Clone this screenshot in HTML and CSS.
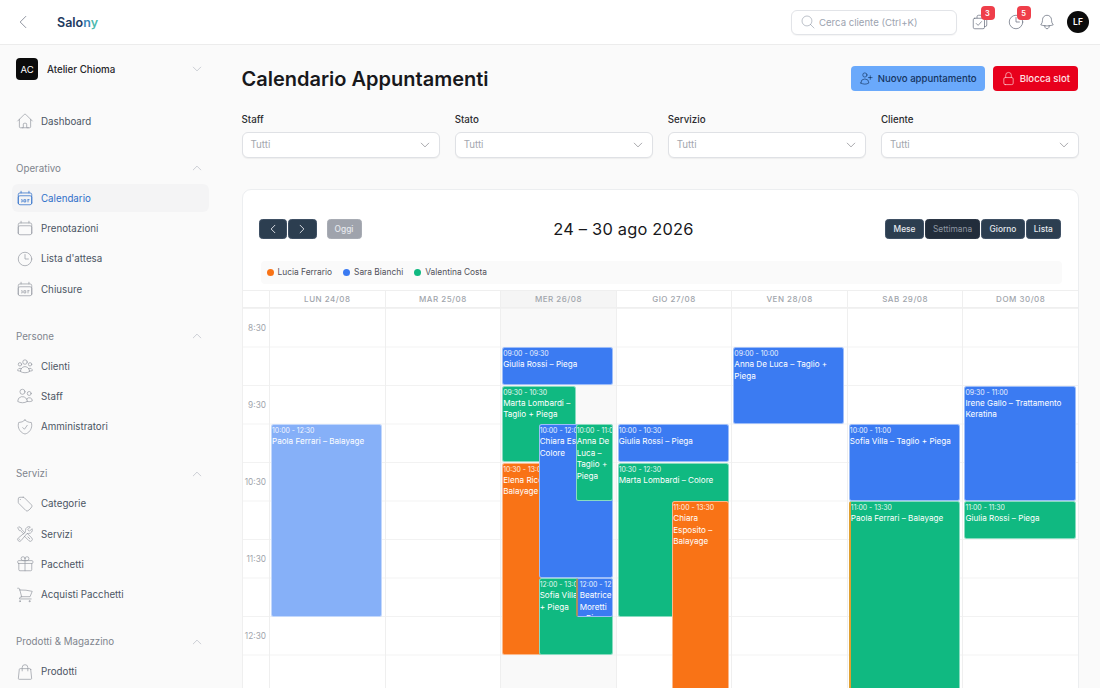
FILE: index.html
```html
<!DOCTYPE html>
<html lang="it">
<head>
  <meta charset="UTF-8" />
  <title>Calendario Appuntamenti</title>
  <link rel="stylesheet" href="styles.css">
</head>
<body>
  <svg class="sprite" xmlns="http://www.w3.org/2000/svg">
    <symbol id="i-home" viewBox="0 0 24 24"><path d="m2.25 12 8.954-8.955c.44-.439 1.152-.439 1.591 0L21.75 12M4.5 9.75v10.125c0 .621.504 1.125 1.125 1.125H9.75v-4.875c0-.621.504-1.125 1.125-1.125h2.25c.621 0 1.125.504 1.125 1.125V21h4.125c.621 0 1.125-.504 1.125-1.125V9.75M8.25 21h8.25"/></symbol>
    <symbol id="i-cal" viewBox="0 0 24 24"><path d="M6.75 3v2.25M17.25 3v2.25M3 18.75V7.5a2.25 2.25 0 0 1 2.25-2.25h13.5A2.25 2.25 0 0 1 21 7.5v11.25m-18 0A2.25 2.25 0 0 0 5.25 21h13.5A2.25 2.25 0 0 0 21 18.75m-18 0v-7.5A2.25 2.25 0 0 1 5.25 9h13.5A2.25 2.25 0 0 1 21 11.25v7.5"/></symbol>
    <symbol id="i-caldays" viewBox="0 0 24 24"><path d="M6.75 3v2.25M17.25 3v2.25M3 18.75V7.5a2.25 2.25 0 0 1 2.25-2.25h13.5A2.25 2.25 0 0 1 21 7.5v11.25m-18 0A2.25 2.25 0 0 0 5.25 21h13.5A2.25 2.25 0 0 0 21 18.75m-18 0v-7.5A2.25 2.25 0 0 1 5.25 9h13.5A2.25 2.25 0 0 1 21 11.25v7.5M7.5 14.25h.75v3h-.75M11 14.25h2v3h-2zM16 14.25h1.5M16 14.25v3"/></symbol>
    <symbol id="i-clock" viewBox="0 0 24 24"><path d="M12 6v6h4.5m4.5 0a9 9 0 1 1-18 0 9 9 0 0 1 18 0Z"/></symbol>
    <symbol id="i-group" viewBox="0 0 24 24"><path d="M18 18.72a9.094 9.094 0 0 0 3.741-.479 3 3 0 0 0-4.682-2.72m.94 3.198.001.031c0 .225-.012.447-.037.666A11.944 11.944 0 0 1 12 21c-2.17 0-4.207-.576-5.963-1.584A6.062 6.062 0 0 1 6 18.719m12 0a5.971 5.971 0 0 0-.941-3.197m0 0A5.995 5.995 0 0 0 12 12.75a5.995 5.995 0 0 0-5.058 2.772m0 0a3 3 0 0 0-4.681 2.72 8.986 8.986 0 0 0 3.74.477m.94-3.197a5.971 5.971 0 0 0-.94 3.197M15 6.75a3 3 0 1 1-6 0 3 3 0 0 1 6 0Zm6 3a2.25 2.25 0 1 1-4.5 0 2.25 2.25 0 0 1 4.5 0Zm-13.5 0a2.25 2.25 0 1 1-4.5 0 2.25 2.25 0 0 1 4.5 0Z"/></symbol>
    <symbol id="i-users" viewBox="0 0 24 24"><path d="M15 19.128a9.38 9.38 0 0 0 2.625.372 9.337 9.337 0 0 0 4.121-.952 4.125 4.125 0 0 0-7.533-2.493M15 19.128v-.003c0-1.113-.285-2.16-.786-3.07M15 19.128v.106A12.318 12.318 0 0 1 8.624 21c-2.331 0-4.512-.645-6.374-1.766l-.001-.109a6.375 6.375 0 0 1 11.964-3.07M12 6.375a3.375 3.375 0 1 1-6.75 0 3.375 3.375 0 0 1 6.75 0Zm8.25 2.25a2.625 2.625 0 1 1-5.25 0 2.625 2.625 0 0 1 5.25 0Z"/></symbol>
    <symbol id="i-shield" viewBox="0 0 24 24"><path d="M9 12.75 11.25 15 15 9.75m-3-7.036A11.959 11.959 0 0 1 3.598 6 11.99 11.99 0 0 0 3 9.749c0 5.592 3.824 10.29 9 11.623 5.176-1.332 9-6.03 9-11.622 0-1.31-.21-2.571-.598-3.751h-.152c-3.196 0-6.1-1.248-8.25-3.285Z"/></symbol>
    <symbol id="i-tag" viewBox="0 0 24 24"><path d="M9.568 3H5.25A2.25 2.25 0 0 0 3 5.25v4.318c0 .597.237 1.17.659 1.591l9.581 9.581c.699.699 1.78.872 2.607.33a18.095 18.095 0 0 0 5.223-5.223c.542-.827.369-1.908-.33-2.607L11.16 3.66A2.25 2.25 0 0 0 9.568 3Z M6 6h.008v.008H6V6Z"/></symbol>
    <symbol id="i-tools" viewBox="0 0 24 24"><path d="M11.42 15.17 17.25 21A2.652 2.652 0 0 0 21 17.25l-5.877-5.877M11.42 15.17l2.496-3.03c.317-.384.74-.626 1.208-.766M11.42 15.17l-4.655 5.653a2.548 2.548 0 1 1-3.586-3.586l6.837-5.63m5.108-.233c.55-.164 1.163-.188 1.743-.14a4.5 4.5 0 0 0 4.486-6.336l-3.276 3.277a3.004 3.004 0 0 1-2.25-2.25l3.276-3.276a4.5 4.5 0 0 0-6.336 4.486c.091 1.076-.071 2.264-.904 2.95l-.102.085m-1.745 1.437L5.909 7.5H4.5L2.25 3.75l1.5-1.5L7.5 4.5v1.409l4.26 4.26m-1.745 1.437 1.745-1.437m6.615 8.206L15.75 15.75M4.867 19.125h.008v.008h-.008v-.008Z"/></symbol>
    <symbol id="i-gift" viewBox="0 0 24 24"><path d="M21 11.25v8.25a1.5 1.5 0 0 1-1.5 1.5H5.25a1.5 1.5 0 0 1-1.5-1.5v-8.25M12 4.875A2.625 2.625 0 1 0 9.375 7.5H12m0-2.625V7.5m0-2.625A2.625 2.625 0 1 1 14.625 7.5H12m0 0V21m-8.625-9.75h18c.621 0 1.125-.504 1.125-1.125v-1.5c0-.621-.504-1.125-1.125-1.125h-18c-.621 0-1.125.504-1.125 1.125v1.5c0 .621.504 1.125 1.125 1.125Z"/></symbol>
    <symbol id="i-cart" viewBox="0 0 24 24"><path d="M2.25 3h1.386c.51 0 .955.343 1.087.835l.383 1.437M7.5 14.25a3 3 0 0 0-3 3h15.75m-12.75-3h11.218c1.121-2.3 2.1-4.684 2.924-7.138a60.114 60.114 0 0 0-16.536-1.84M7.5 14.25 5.106 5.272M6 20.25a.75.75 0 1 1-1.5 0 .75.75 0 0 1 1.5 0Zm12.75 0a.75.75 0 1 1-1.5 0 .75.75 0 0 1 1.5 0Z"/></symbol>
    <symbol id="i-bag" viewBox="0 0 24 24"><path d="M15.75 10.5V6a3.75 3.75 0 1 0-7.5 0v4.5m11.356-1.993 1.263 12c.07.665-.45 1.243-1.119 1.243H4.25a1.125 1.125 0 0 1-1.12-1.243l1.264-12A1.125 1.125 0 0 1 5.513 7.5h12.974c.576 0 1.059.435 1.119 1.007Z"/></symbol>
    <symbol id="i-down" viewBox="0 0 24 24"><path d="m19.5 8.25-7.5 7.5-7.5-7.5"/></symbol>
    <symbol id="i-up" viewBox="0 0 24 24"><path d="m4.5 15.75 7.5-7.5 7.5 7.5"/></symbol>
    <symbol id="i-left" viewBox="0 0 24 24"><path d="M15.75 19.5 8.25 12l7.5-7.5"/></symbol>
    <symbol id="i-right" viewBox="0 0 24 24"><path d="m8.25 4.5 7.5 7.5-7.5 7.5"/></symbol>
    <symbol id="i-search" viewBox="0 0 24 24"><path d="m21 21-5.197-5.197m0 0A7.5 7.5 0 1 0 5.196 5.196a7.5 7.5 0 0 0 10.607 10.607Z"/></symbol>
    <symbol id="i-bell" viewBox="0 0 24 24"><path d="M14.857 17.082a23.848 23.848 0 0 0 5.454-1.31A8.967 8.967 0 0 1 18 9.75V9A6 6 0 0 0 6 9v.75a8.967 8.967 0 0 1-2.312 6.022c1.733.64 3.56 1.085 5.455 1.31m5.714 0a24.255 24.255 0 0 1-5.714 0m5.714 0a3 3 0 1 1-5.714 0"/></symbol>
    <symbol id="i-tasks" viewBox="0 0 24 24"><path d="M8 6.5V5a2 2 0 0 1 2-2h4a2 2 0 0 1 2 2v1.5M18 7h1a2 2 0 0 1 2 2v7a2 2 0 0 1-2 2h-1M5 7h11a2 2 0 0 1 2 2v10a2 2 0 0 1-2 2H5a2 2 0 0 1-2-2V9a2 2 0 0 1 2-2ZM7 14l2.5 2.5L14 11.5"/></symbol>
    <symbol id="i-userplus" viewBox="0 0 24 24"><path d="M18 7.5v3m0 0v3m0-3h3m-3 0h-3m-2.25-4.125a3.375 3.375 0 1 1-6.75 0 3.375 3.375 0 0 1 6.75 0ZM3 19.235v-.11a6.375 6.375 0 0 1 12.75 0v.109A12.318 12.318 0 0 1 9.374 21c-2.331 0-4.512-.645-6.374-1.766Z"/></symbol>
    <symbol id="i-lock" viewBox="0 0 24 24"><path d="M16.5 10.5V6.75a4.5 4.5 0 1 0-9 0v3.75m-.75 11.25h10.5a2.25 2.25 0 0 0 2.25-2.25v-6.75a2.25 2.25 0 0 0-2.25-2.25H6.75a2.25 2.25 0 0 0-2.25 2.25v6.75a2.25 2.25 0 0 0 2.25 2.25Z"/></symbol>
  </svg>

  <header class="topbar">
    <svg class="icon back-icon"><use href="#i-left"/></svg>
    <div class="logo">Salo<span class="logo-n">n</span><span class="logo-y">y</span></div>
    <div class="topbar-right">
      <div class="search">
        <svg class="icon search-icon"><use href="#i-search"/></svg>
        <span>Cerca cliente (Ctrl+K)</span>
      </div>
      <div class="top-icon"><svg class="icon"><use href="#i-tasks"/></svg><span class="badge">3</span></div>
      <div class="top-icon"><svg class="icon"><use href="#i-clock"/></svg><span class="badge">5</span></div>
      <div class="top-icon bell"><svg class="icon"><use href="#i-bell"/></svg></div>
      <div class="avatar">LF</div>
    </div>
  </header>

  <div class="layout">
    <aside class="sidebar">
      <div class="org">
        <div class="org-tile">AC</div>
        <span class="org-name">Atelier Chioma</span>
        <svg class="icon chev"><use href="#i-down"/></svg>
      </div>

      <a class="nav-item dash"><svg class="icon"><use href="#i-home"/></svg>Dashboard</a>

      <div class="nav-group">
        <div class="group-title">Operativo<svg class="icon chev"><use href="#i-up"/></svg></div>
        <a class="nav-item active"><svg class="icon"><use href="#i-caldays"/></svg>Calendario</a>
        <a class="nav-item"><svg class="icon"><use href="#i-cal"/></svg>Prenotazioni</a>
        <a class="nav-item"><svg class="icon"><use href="#i-clock"/></svg>Lista d'attesa</a>
        <a class="nav-item"><svg class="icon"><use href="#i-caldays"/></svg>Chiusure</a>
      </div>

      <div class="nav-group">
        <div class="group-title">Persone<svg class="icon chev"><use href="#i-up"/></svg></div>
        <a class="nav-item"><svg class="icon"><use href="#i-group"/></svg>Clienti</a>
        <a class="nav-item"><svg class="icon"><use href="#i-users"/></svg>Staff</a>
        <a class="nav-item"><svg class="icon"><use href="#i-shield"/></svg>Amministratori</a>
      </div>

      <div class="nav-group">
        <div class="group-title">Servizi<svg class="icon chev"><use href="#i-up"/></svg></div>
        <a class="nav-item"><svg class="icon"><use href="#i-tag"/></svg>Categorie</a>
        <a class="nav-item"><svg class="icon"><use href="#i-tools"/></svg>Servizi</a>
        <a class="nav-item"><svg class="icon"><use href="#i-gift"/></svg>Pacchetti</a>
        <a class="nav-item"><svg class="icon"><use href="#i-cart"/></svg>Acquisti Pacchetti</a>
      </div>

      <div class="nav-group">
        <div class="group-title">Prodotti &amp; Magazzino<svg class="icon chev"><use href="#i-up"/></svg></div>
        <a class="nav-item"><svg class="icon"><use href="#i-bag"/></svg>Prodotti</a>
      </div>
    </aside>

    <main class="content">
      <div class="page-head">
        <h1>Calendario Appuntamenti</h1>
        <div class="page-actions">
          <button class="btn btn-blue"><svg class="icon"><use href="#i-userplus"/></svg>Nuovo appuntamento</button>
          <button class="btn btn-red"><svg class="icon"><use href="#i-lock"/></svg>Blocca slot</button>
        </div>
      </div>

      <div class="filters">
        <div class="filter"><label>Staff</label><div class="select">Tutti<svg class="icon"><use href="#i-down"/></svg></div></div>
        <div class="filter"><label>Stato</label><div class="select">Tutti<svg class="icon"><use href="#i-down"/></svg></div></div>
        <div class="filter"><label>Servizio</label><div class="select">Tutti<svg class="icon"><use href="#i-down"/></svg></div></div>
        <div class="filter"><label>Cliente</label><div class="select">Tutti<svg class="icon"><use href="#i-down"/></svg></div></div>
      </div>

      <section class="card">
        <div class="cal-toolbar">
          <div class="cal-left">
            <button class="cal-btn arrow"><svg class="icon"><use href="#i-left"/></svg></button>
            <button class="cal-btn arrow"><svg class="icon"><use href="#i-right"/></svg></button>
            <button class="cal-btn today">Oggi</button>
          </div>
          <h2>24 – 30 ago 2026</h2>
          <div class="cal-right">
            <button class="cal-btn">Mese</button>
            <button class="cal-btn current">Settimana</button>
            <button class="cal-btn">Giorno</button>
            <button class="cal-btn">Lista</button>
          </div>
        </div>

        <div class="legend">
          <span class="legend-item"><i class="dot orange"></i>Lucia Ferrario</span>
          <span class="legend-item"><i class="dot blue"></i>Sara Bianchi</span>
          <span class="legend-item"><i class="dot green"></i>Valentina Costa</span>
        </div>

        <div class="week">
          <div class="week-head">
            <div class="head-cell"></div>
            <div class="head-cell">LUN 24/08</div>
            <div class="head-cell">MAR 25/08</div>
            <div class="head-cell today-head">MER 26/08</div>
            <div class="head-cell">GIO 27/08</div>
            <div class="head-cell">VEN 28/08</div>
            <div class="head-cell">SAB 29/08</div>
            <div class="head-cell">DOM 30/08</div>
          </div>
          <div class="week-body">
            <div class="times">
              <div class="time">8:30</div>
              <div class="time">9:30</div>
              <div class="time">10:30</div>
              <div class="time">11:30</div>
              <div class="time">12:30</div>
            </div>

            <div class="day">
              <div class="ev light" style="top:116px;height:192.5px;left:1px;width:110.5px"><small>10:00 - 12:30</small>Paola Ferrari – Balayage</div>
            </div>

            <div class="day"></div>

            <div class="day today-col">
              <div class="ev blue" style="top:39px;height:38px;left:1px;width:111px"><small>09:00 - 09:30</small>Giulia Rossi – Piega</div>
              <div class="ev green" style="top:77.5px;height:76.5px;left:1px;width:74px"><small>09:30 - 10:30</small>Marta Lombardi – Taglio + Piega</div>
              <div class="ev orange" style="top:154.5px;height:192px;left:1px;width:74px"><small>10:30 - 13:00</small>Elena Ricci – Balayage</div>
              <div class="ev blue" style="top:116px;height:154px;left:37.5px;width:74.5px"><small>10:00 - 12:00</small>Chiara Esposito – Colore</div>
              <div class="ev green" style="top:116px;height:77px;left:74.5px;width:37.5px"><small>10:00 - 11:00</small>Anna De Luca – Taglio + Piega</div>
              <div class="ev green" style="top:270px;height:76.5px;left:37.5px;width:74.5px"><small>12:00 - 13:00</small>Sofia Villa – Taglio + Piega</div>
              <div class="ev blue stripe" style="top:270px;height:38.5px;left:74.5px;width:37.5px"><small>12:00 - 12:30</small>Beatrice Moretti – Piega</div>
            </div>

            <div class="day">
              <div class="ev blue" style="top:116px;height:38px;left:1px;width:111px"><small>10:00 - 10:30</small>Giulia Rossi – Piega</div>
              <div class="ev green" style="top:154.5px;height:154px;left:1px;width:111px"><small>10:30 - 12:30</small>Marta Lombardi – Colore</div>
              <div class="ev orange" style="top:193px;height:192px;left:55.5px;width:56.5px"><small>11:00 - 13:30</small>Chiara Esposito – Balayage</div>
            </div>

            <div class="day">
              <div class="ev blue" style="top:39px;height:77px;left:1px;width:111px"><small>09:00 - 10:00</small>Anna De Luca – Taglio + Piega</div>
            </div>

            <div class="day">
              <div class="ev blue" style="top:116px;height:76.5px;left:1px;width:111px"><small>10:00 - 11:00</small>Sofia Villa – Taglio + Piega</div>
              <div class="ev green stripe-orange" style="top:193px;height:192px;left:1px;width:111px"><small>11:00 - 13:30</small>Paola Ferrari – Balayage</div>
            </div>

            <div class="day">
              <div class="ev blue" style="top:77.5px;height:115px;left:1px;width:111.5px"><small>09:30 - 11:00</small>Irene Gallo – Trattamento Keratina</div>
              <div class="ev green" style="top:193px;height:38px;left:1px;width:111.5px"><small>11:00 - 11:30</small>Giulia Rossi – Piega</div>
            </div>
          </div>
        </div>
      </section>
    </main>
  </div>
</body>
</html>
```

FILE: styles.css
```css
* {
  box-sizing: border-box;
}

html, body {
  height: 100%;
}

body {
  margin: 0;
  height: 688px;
  overflow: hidden;
  display: flex;
  flex-direction: column;
  background: #fafafa;
  color: #1f2937;
  font-family: Inter, "Liberation Sans", sans-serif;
  font-size: 9.75px;
}

.sprite {
  display: none;
}

.icon {
  width: 18px;
  height: 18px;
  flex: none;
  fill: none;
  stroke: currentColor;
  stroke-width: 1;
  stroke-linecap: round;
  stroke-linejoin: round;
}

button {
  font-family: inherit;
  border: none;
  cursor: pointer;
}

/* top bar */
.topbar {
  height: 45px;
  flex: none;
  display: flex;
  align-items: center;
  background: #fff;
  border-bottom: 1px solid #ececec;
  padding: 0 11px 0 14px;
  z-index: 2;
}

.back-icon {
  color: #6b7280;
  margin-right: 25px;
}

.logo {
  font-size: 12.5px;
  font-weight: 600;
  color: #1e3a5f;
}

.logo-n {
  color: #3a86b8;
}

.logo-y {
  color: #4bb9ad;
}

.topbar-right {
  margin-left: auto;
  display: flex;
  align-items: center;
}

.search {
  width: 166px;
  height: 25px;
  margin-right: 14px;
  display: flex;
  align-items: center;
  gap: 3px;
  padding: 0 8px;
  background: #fff;
  border: 1px solid #e2e4e8;
  border-radius: 6px;
  box-shadow: 0 1px 1px rgba(0, 0, 0, 0.04);
  color: #9ca3af;
  font-size: 9.6px;
}

.search-icon {
  width: 16px;
  height: 16px;
}

.top-icon {
  position: relative;
  width: 18px;
  height: 18px;
  margin-right: 18px;
  color: #6b7280;
}

.top-icon.bell {
  margin-right: 11px;
  margin-left: -5px;
}

.badge {
  position: absolute;
  top: -7px;
  left: 9.5px;
  width: 14px;
  height: 14px;
  border-radius: 4px;
  background: #ef3e4a;
  color: #fff;
  font-size: 7.5px;
  font-weight: 600;
  display: flex;
  align-items: center;
  justify-content: center;
}

.avatar {
  width: 22px;
  height: 22px;
  border-radius: 50%;
  background: #0b0b0b;
  color: #fff;
  font-size: 8.5px;
  font-weight: 600;
  display: flex;
  align-items: center;
  justify-content: center;
}

/* layout */
.layout {
  flex: 1;
  min-height: 0;
  display: flex;
}

.sidebar {
  width: 230px;
  flex: none;
  padding: 13px 21px 0 12px;
  overflow: hidden;
}

.org {
  display: flex;
  align-items: center;
  height: 22px;
  padding-left: 4px;
  margin-bottom: 16px;
}

.org-tile {
  width: 22px;
  height: 22px;
  border-radius: 4px;
  background: #0b0b0b;
  color: #fff;
  font-size: 9.5px;
  display: flex;
  align-items: center;
  justify-content: center;
  margin-right: 9px;
}

.org-name {
  font-weight: 500;
  color: #27272a;
}

.chev {
  width: 12px;
  height: 12px;
  color: #9ca3af;
  margin-left: auto;
  margin-right: 6px;
}

.nav-item {
  height: 28px;
  display: flex;
  align-items: center;
  gap: 7px;
  padding-left: 4px;
  color: #4b5563;
  border-radius: 6px;
}

.nav-item .icon {
  color: #9a9ea6;
}

.nav-item + .nav-item {
  margin-top: 2.35px;
}

.nav-item.dash {
  margin-top: 27px;
}

.nav-item.active {
  background: #f4f4f5;
  color: #2f6fc9;
}

.nav-item.active .icon {
  color: #2f6fc9;
}

.nav-group {
  margin-top: 24px;
}

.group-title {
  height: 18px;
  display: flex;
  align-items: center;
  padding-left: 4px;
  margin-bottom: 7px;
  color: #80858e;
}

/* main */
.content {
  flex: 1;
  min-width: 0;
  padding: 21px 21px 0 11.5px;
  overflow: hidden;
}

.page-head {
  display: flex;
  align-items: center;
  justify-content: space-between;
  height: 25px;
  margin-bottom: 22px;
}

h1 {
  margin: 0;
  font-size: 20px;
  font-weight: 600;
  color: #18181b;
}

.page-actions {
  display: flex;
  gap: 8px;
  margin-right: 1px;
}

.btn {
  height: 25px;
  display: flex;
  align-items: center;
  gap: 4px;
  padding: 0 8px;
  border-radius: 4px;
  font-size: 9.6px;
  font-weight: 500;
}

.btn .icon {
  width: 15px;
  height: 15px;
}

.btn-blue {
  background: #6aa9fb;
  color: #14345f;
}

.btn-red {
  background: #e8001c;
  color: #ffe3e6;
}

.filters {
  display: grid;
  grid-template-columns: repeat(4, 1fr);
  gap: 15px;
  margin-bottom: 31.5px;
}

.filter label {
  display: block;
  height: 13px;
  line-height: 13px;
  margin-bottom: 6px;
  font-weight: 500;
  color: #2a2a2e;
}

.select {
  height: 25.5px;
  display: flex;
  align-items: center;
  justify-content: space-between;
  padding: 0 8px;
  background: #fff;
  border: 1px solid #dfe1e5;
  border-radius: 6px;
  box-shadow: 0 1px 1px rgba(0, 0, 0, 0.05);
  color: #a3a7ae;
}

.select .icon {
  width: 12px;
  height: 12px;
  color: #52525b;
}

.card {
  background: #fff;
  border: 1px solid #eceef0;
  border-radius: 9px;
  height: 600px;
  padding-top: 29px;
}

.cal-toolbar {
  display: flex;
  align-items: center;
  justify-content: space-between;
  height: 20px;
  padding: 0 17px 0 16px;
  margin-bottom: 22px;
}

.cal-toolbar h2 {
  margin: 0;
  font-size: 16.4px;
  font-weight: 400;
  color: #18181b;
  letter-spacing: 0.2px;
}

.cal-left, .cal-right {
  display: flex;
  gap: 1px;
}

.cal-btn {
  height: 20px;
  padding: 0 7.2px;
  background: #2c3e50;
  color: #e6e9ee;
  border: 1px solid #3f5064;
  border-radius: 3.5px;
  font-size: 8.4px;
  font-weight: 500;
  display: flex;
  align-items: center;
  justify-content: center;
}

.cal-btn.arrow {
  width: 28.5px;
  padding: 0;
}

.cal-btn.arrow .icon {
  width: 12px;
  height: 12px;
  stroke-width: 1.8;
}

.cal-btn.today {
  background: #9fa3ac;
  border-color: #a8acb4;
  margin-left: 9px;
  width: 35px;
  padding: 0;
}

.cal-btn.current {
  background: #222d3b;
  border-color: #2b3645;
  color: #8e96a1;
  font-weight: 400;
}

.legend {
  height: 22.5px;
  margin: 0 16px 6px 18px;
  padding-left: 6px;
  display: flex;
  align-items: center;
  gap: 11px;
  background: #fafafa;
  border-radius: 4px;
  font-size: 8.4px;
  color: #52525b;
}

.legend-item {
  display: flex;
  align-items: center;
  gap: 4px;
}

.dot {
  width: 7px;
  height: 7px;
  border-radius: 50%;
}

.dot.orange { background: #f97316; }
.dot.blue { background: #3b7bf2; }
.dot.green { background: #10b981; }

.week {
  margin-left: -1px;
  width: 836.5px;
  border-top: 1px solid #efefef;
}

.week-head {
  display: grid;
  grid-template-columns: 27.5px repeat(7, 1fr);
  height: 17.5px;
  border-bottom: 1px solid #efefef;
}

.head-cell {
  display: flex;
  align-items: center;
  justify-content: center;
  border-left: 1px solid #efefef;
  font-size: 8px;
  font-weight: 500;
  letter-spacing: 0.5px;
  color: #a1a5ac;
}

.today-head {
  background: #f5f5f5;
}

.today-col {
  background-color: #f9f9f9;
}

.week-body {
  display: grid;
  grid-template-columns: 27.5px repeat(7, 1fr);
  height: 420px;
}

.times {
  border-left: 1px solid #efefef;
  background-image: linear-gradient(#f2f2f2 1px, transparent 1px);
  background-size: 100% 38.5px;
}

.time {
  height: 77px;
  padding: 15px 3px 0 0;
  display: flex;
  align-items: flex-start;
  justify-content: flex-end;
  font-size: 8.3px;
  color: #a1a5ac;
}

.day {
  position: relative;
  border-left: 1px solid #efefef;
  background-image: linear-gradient(#f2f2f2 1px, transparent 1px);
  background-size: 100% 38.5px;
}

.ev {
  position: absolute;
  overflow: hidden;
  padding: 1px 0 0 0;
  border: 1px solid rgba(255, 255, 255, 0.5);
  border-radius: 2.5px;
  color: #fff;
  font-size: 8.15px;
  line-height: 11.5px;
}

.ev small {
  display: block;
  font-size: 6.9px;
  line-height: 10px;
  white-space: nowrap;
  opacity: 0.9;
}

.ev.blue { background: #3b7bf2; }
.ev.green { background: #10b981; }
.ev.orange { background: #f97316; }
.ev.light { background: #86b0f8; }

.ev.stripe {
  border-left: 2px solid #a89062;
  padding-left: 2px;
}

.ev.stripe-orange {
  border-left: 2px solid #e0a030;
}
```
